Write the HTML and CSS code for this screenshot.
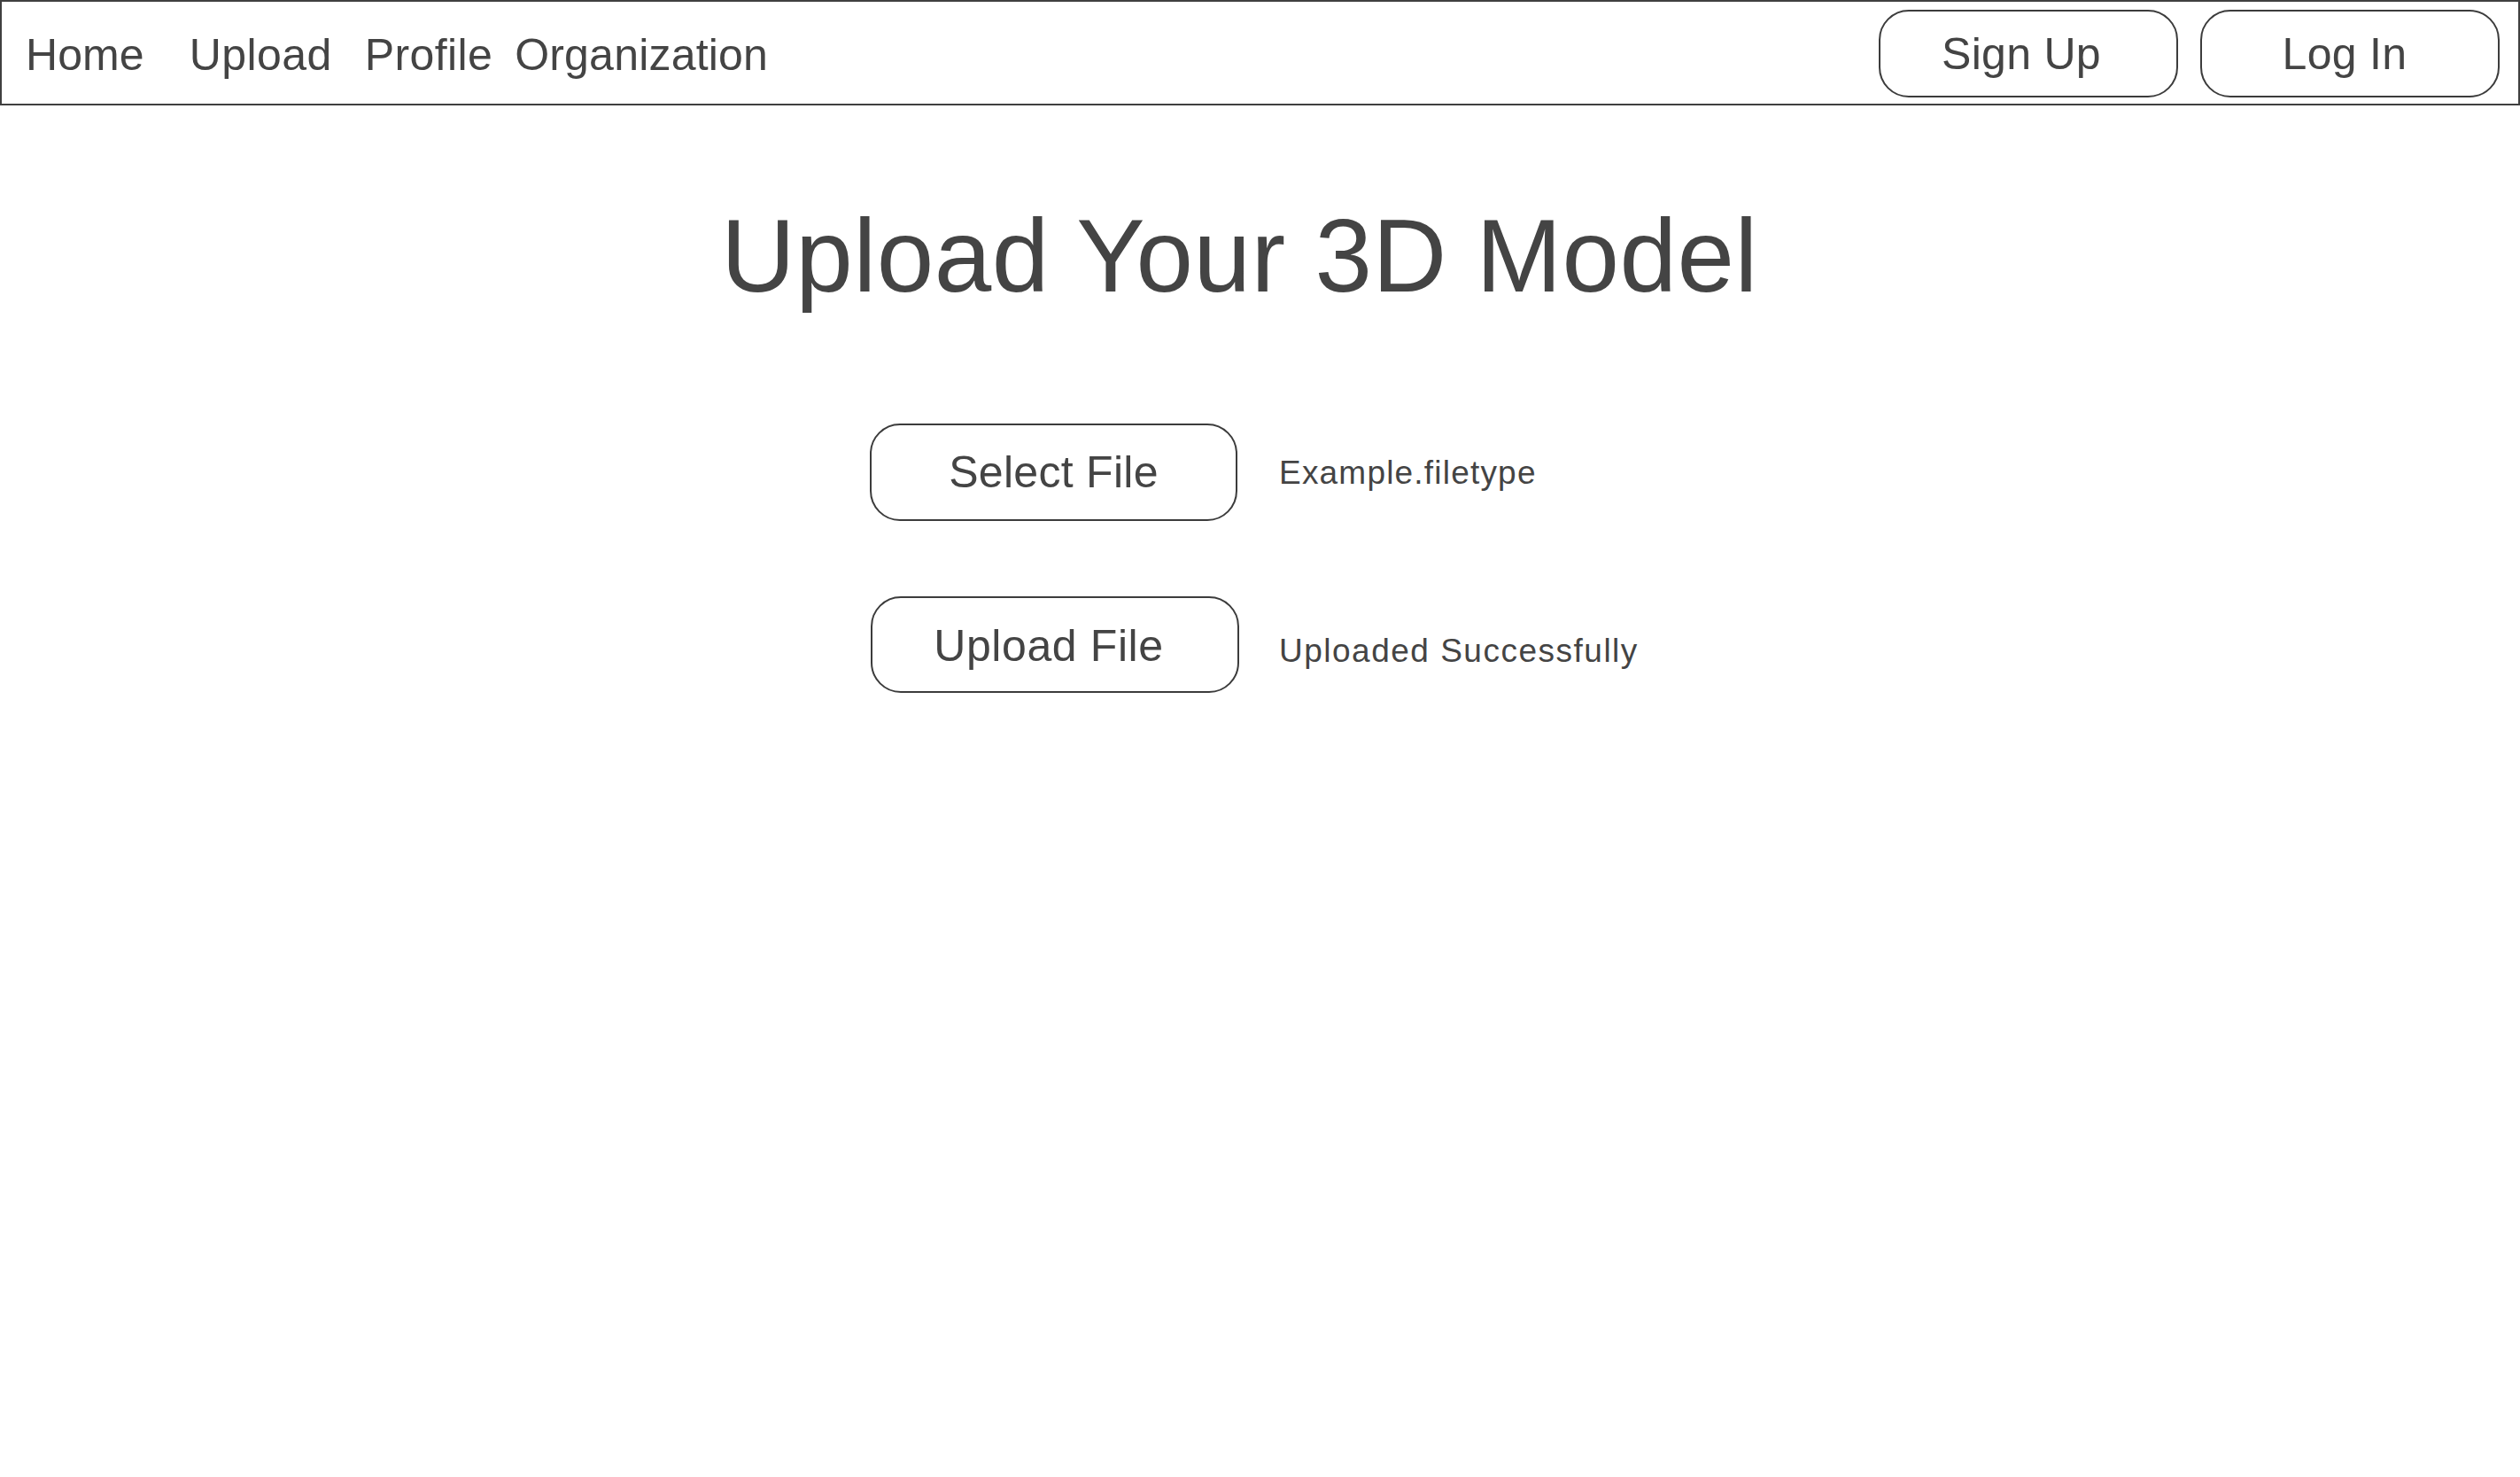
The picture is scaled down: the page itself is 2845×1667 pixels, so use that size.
FILE: index.html
```html
<!DOCTYPE html>
<html lang="en">
<head>
<meta charset="utf-8">
<title>Upload Your 3D Model</title>
<link rel="stylesheet" href="styles.css">
</head>
<body>
<nav class="topbar">
  <div class="nav-links">
    <a class="nav-link nav-home" href="#">Home</a>
    <a class="nav-link nav-upload" href="#">Upload</a>
    <a class="nav-link nav-profile" href="#">Profile</a>
    <a class="nav-link nav-org" href="#">Organization</a>
  </div>
  <div class="nav-actions">
    <button class="pill nav-btn nav-signup" type="button">Sign Up</button>
    <button class="pill nav-btn" type="button">Log In</button>
  </div>
</nav>
<main class="content">
  <h1 class="title">Upload Your 3D Model</h1>
  <div class="form">
    <div class="row">
      <button class="pill action" type="button">Select File</button>
      <span class="note">Example.filetype</span>
    </div>
    <div class="row row-second">
      <button class="pill action action-upload" type="button">Upload File</button>
      <span class="note note-status">Uploaded Successfully</span>
    </div>
  </div>
</main>
</body>
</html>
```

FILE: styles.css
```css
* { box-sizing: border-box; }

html, body {
  margin: 0;
  padding: 0;
  background: #ffffff;
}

body {
  font-family: "Liberation Sans", Arial, Helvetica, sans-serif;
  color: #444444;
  width: 2845px;
  min-height: 1667px;
}

.topbar {
  display: flex;
  align-items: center;
  justify-content: space-between;
  height: 119px;
  border: 2px solid #404040;
  padding: 0 21px 0 27px;
}

.nav-links {
  display: flex;
  align-items: center;
}

.nav-link {
  font-size: 50px;
  line-height: 1;
  letter-spacing: 0.4px;
  padding-top: 4px;
  color: #444444;
  text-decoration: none;
}

.nav-home { letter-spacing: 0.1px; }
.nav-upload { margin-left: 51px; }
.nav-profile { margin-left: 37px; }
.nav-org { margin-left: 25px; letter-spacing: 0.2px; }

.nav-actions {
  display: flex;
  align-items: center;
  gap: 25px;
  margin-top: 2px;
}

.pill {
  font-family: "Liberation Sans", Arial, Helvetica, sans-serif;
  color: #444444;
  background: #ffffff;
  border: 2px solid #3c3c3c;
  border-radius: 34px;
  font-size: 50px;
  line-height: 1;
  letter-spacing: 0.3px;
  display: flex;
  align-items: center;
  justify-content: center;
  padding: 0;
  cursor: pointer;
}

.nav-btn {
  width: 338px;
  height: 99px;
  padding-right: 12px;
}

.nav-signup { padding-right: 16px; }

.content {
  padding-top: 112px;
}

.title {
  margin: 0;
  font-size: 116px;
  line-height: 1;
  letter-spacing: 0.5px;
  font-weight: normal;
  text-align: center;
  padding-right: 46px;
  color: #444444;
}

.form {
  margin-top: 131px;
  margin-left: 982px;
  display: flex;
  flex-direction: column;
  gap: 85px;
}

.row {
  display: flex;
  align-items: center;
  gap: 47px;
}

.action {
  width: 415px;
  height: 110px;
}

.action-upload {
  margin-left: 1px;
  width: 416px;
  height: 109px;
  padding-right: 14px;
  padding-top: 3px;
  letter-spacing: 0.6px;
}

.row-second .note { margin-left: -2px; }

.note {
  font-size: 37px;
  line-height: 1;
  letter-spacing: 1.2px;
  color: #444444;
}

.note-status {
  padding-top: 13px;
  letter-spacing: 1.5px;
}
```
